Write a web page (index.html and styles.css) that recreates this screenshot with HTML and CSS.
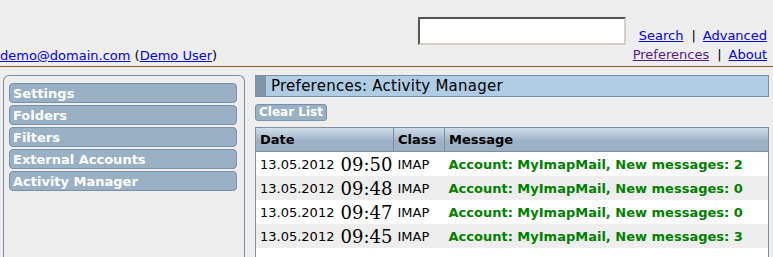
FILE: index.html
```html
<!DOCTYPE html>
<html lang="en">
<head>
    <meta charset="UTF-8">
    <title>Preferences: Activity Manager</title>
    <link rel="stylesheet" href="styles.css">
</head>
<body>

<div class="top">
    <div class="user">
        <a href="#">demo@domain.com</a> (<a href="#">Demo User</a>)
    </div>
    <div class="nav">
        <div class="search-row">
            <input type="text" class="search">
            <span class="links"><a href="#">Search</a><span class="sep">|</span><a href="#">Advanced</a></span>
        </div>
        <div class="links"><a href="#" class="visited">Preferences</a><span class="sep">|</span><a href="#">About</a></div>
    </div>
</div>

<div class="main">
    <div class="sidebar">
        <a href="#" class="menu-item">Settings</a>
        <a href="#" class="menu-item">Folders</a>
        <a href="#" class="menu-item">Filters</a>
        <a href="#" class="menu-item">External Accounts</a>
        <a href="#" class="menu-item">Activity Manager</a>
    </div>

    <div class="content">
        <div class="title"><span class="title-mark"></span>Preferences: Activity Manager</div>
        <button class="btn">Clear List</button>

        <div class="table-box">
            <table>
                <thead>
                    <tr>
                        <th class="col-date">Date</th>
                        <th class="col-class">Class</th>
                        <th>Message</th>
                    </tr>
                </thead>
                <tbody>
                    <tr>
                        <td class="date">13.05.2012 <span class="time">09:50</span></td>
                        <td>IMAP</td>
                        <td class="msg">Account: MyImapMail, New messages: 2</td>
                    </tr>
                    <tr class="alt">
                        <td class="date">13.05.2012 <span class="time">09:48</span></td>
                        <td>IMAP</td>
                        <td class="msg">Account: MyImapMail, New messages: 0</td>
                    </tr>
                    <tr>
                        <td class="date">13.05.2012 <span class="time">09:47</span></td>
                        <td>IMAP</td>
                        <td class="msg">Account: MyImapMail, New messages: 0</td>
                    </tr>
                    <tr class="alt">
                        <td class="date">13.05.2012 <span class="time">09:45</span></td>
                        <td>IMAP</td>
                        <td class="msg">Account: MyImapMail, New messages: 3</td>
                    </tr>
                </tbody>
            </table>
        </div>
    </div>
</div>

</body>
</html>
```

FILE: styles.css
```css
body {
    font-family: "DejaVu Sans", Verdana, sans-serif;
    font-size: 13px;
    background-color: #eeeeee;
    color: #000;
    margin: 0;
    padding: 0;
    overflow: hidden;
}
a {
    color: #0000ee;
}
a.visited {
    color: #551a8b;
}
.top {
    display: flex;
    justify-content: space-between;
    align-items: flex-end;
    height: 66px;
    border-bottom: 1px solid #8b5a1e;
    padding-right: 6px;
}
.user {
    padding-bottom: 3px;
}
.nav {
    display: flex;
    flex-direction: column;
    align-items: flex-end;
    padding-bottom: 3px;
}
.search-row {
    display: flex;
    align-items: flex-end;
    gap: 13px;
}
.search {
    width: 208px;
    height: 28px;
    box-sizing: border-box;
    margin: 0 0 -1px 0;
    border: 2px solid;
    border-color: #555 #d4d0c8 #d4d0c8 #555;
    background: #fff;
}
.links {
    line-height: 16px;
}
.sep {
    padding: 0 7px 0 8px;
}
.nav > .links {
    margin-top: 3px;
}
.main {
    display: flex;
    gap: 10px;
    padding: 8px 4px 0 3px;
}
.sidebar {
    width: 242px;
    height: 182px;
    box-sizing: border-box;
    border: 1px solid #7f8fa0;
    border-bottom: none;
    border-radius: 6px 6px 0 0;
    padding: 7px 7px 0 5px;
    display: flex;
    flex-direction: column;
    gap: 2px;
}
.menu-item {
    display: block;
    height: 20px;
    box-sizing: border-box;
    background-color: #9ab0c4;
    border: 1px solid #7890a8;
    border-radius: 4px;
    color: #fff;
    font-weight: bold;
    text-decoration: none;
    padding-left: 3px;
    line-height: 19px;
}
.content {
    flex: 1;
}
.title {
    display: flex;
    align-items: center;
    height: 22px;
    box-sizing: border-box;
    background-color: #b0cce4;
    border: 1px solid #7f8fa0;
    font-size: 15px;
    letter-spacing: 0.25px;
}
.title-mark {
    width: 10px;
    align-self: stretch;
    background-color: #7f95a8;
    margin-right: 5px;
}
.btn {
    display: block;
    margin-top: 7px;
    height: 17px;
    padding: 0 3px;
    background-color: #9ab0c4;
    border: 1px solid #7890a8;
    border-radius: 3px;
    color: #fff;
    font-family: "DejaVu Sans", Verdana, sans-serif;
    font-weight: bold;
    font-size: 12px;
    line-height: 15px;
}
.table-box {
    margin-top: 6px;
    background-color: #fff;
    border: 1px solid #7f8fa0;
    border-bottom: none;
    height: 129px;
}
table {
    width: 100%;
    border-collapse: collapse;
}
th {
    height: 23px;
    text-align: left;
    padding: 0 4px;
    background: linear-gradient(#d0dde9, #9ab0c4 60%);
    border-bottom: 1px solid #7f8fa0;
    border-right: 1px solid #7f8fa0;
    font-size: 13px;
}
th:last-child {
    border-right: none;
}
.col-date {
    width: 129px;
}
.col-class {
    width: 42px;
}
td {
    height: 24px;
    padding: 0 4px;
    vertical-align: middle;
    white-space: nowrap;
}
td.date {
    padding-right: 0;
}
tr.alt td {
    background-color: #eeeeee;
}
.time {
    font-family: "DejaVu Serif", "Times New Roman", serif;
    font-size: 18px;
    margin-left: 2px;
    vertical-align: -2px;
}
.msg {
    color: #008000;
    font-weight: bold;
}
```
